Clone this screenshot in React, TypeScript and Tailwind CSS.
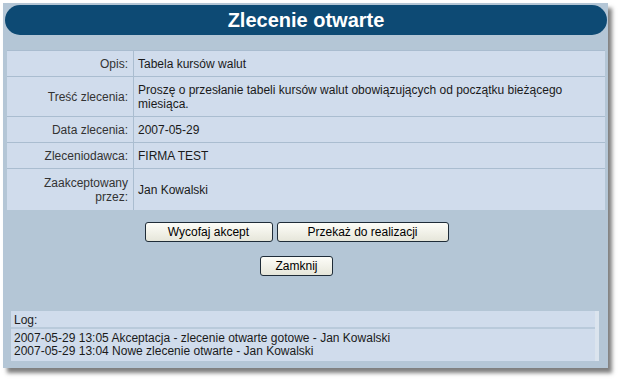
import React from "react";

const rows: { label: string; value: string; h: string }[] = [
  { label: "Opis:", value: "Tabela kursów walut", h: "h-[26px]" },
  {
    label: "Treść zlecenia:",
    value:
      "Proszę o przesłanie tabeli kursów walut obowiązujących od początku bieżącego miesiąca.",
    h: "h-[40px]",
  },
  { label: "Data zlecenia:", value: "2007-05-29", h: "h-[26px]" },
  { label: "Zleceniodawca:", value: "FIRMA TEST", h: "h-[26px]" },
  { label: "Zaakceptowany przez:", value: "Jan Kowalski", h: "h-[41px]" },
];

function Btn({ children, w }: { children: React.ReactNode; w: string }) {
  return (
    <button
      className={`${w} h-[20px] rounded-[3px] border border-[#1f2c38] bg-gradient-to-b from-[#fdfdf8] to-[#e6e6da] text-[12px] leading-[18px] text-black text-center`}
    >
      {children}
    </button>
  );
}

export default function App() {
  return (
    <div className="w-[621px] h-[383px] bg-white font-['Liberation_Sans',Arial,sans-serif] pt-[3px] pl-[3px]">
      <div className="w-[605px] h-[365px] bg-[#b4c6d6] shadow-[4px_5px_4px_rgba(0,0,0,0.5)] flex flex-col">
        <div className="ml-[2px] mr-[1px] mt-[2px] h-[30px] rounded-full bg-[#0d4a74] flex items-center justify-center">
          <span className="text-white font-bold text-[20px] leading-none">Zlecenie otwarte</span>
        </div>

        <div className="mt-[15px] ml-[4px] mr-[3px] border-t border-[#a9bccf] bg-[#d0dcec]">
          {rows.map((r, i) => (
            <div
              key={r.label}
              className={`flex ${r.h} ${i < rows.length - 1 ? "border-b border-[#aabdd0]" : ""}`}
            >
              <div className="w-[127px] shrink-0 border-r border-[#aabdd0] flex items-center justify-end pl-[8px] pr-[5px] text-right text-[12px] leading-[14px] text-[#333]">
                {r.label}
              </div>
              <div className="flex-1 flex items-center pl-[4px] pr-[8px] text-[12px] leading-[14px] text-[#1a1a1a]">
                {r.value}
              </div>
            </div>
          ))}
        </div>

        <div className="mt-[12px] flex justify-center gap-[4px] pr-[18px]">
          <Btn w="w-[128px]">Wycofaj akcept</Btn>
          <Btn w="w-[172px]">Przekaż do realizacji</Btn>
        </div>
        <div className="mt-[14px] flex justify-center pr-[18px]">
          <Btn w="w-[73px]">Zamknij</Btn>
        </div>

        <div className="mt-[35px] ml-[8px] w-[588px] bg-[#d0dcec] border-r-[4px] border-[#dbe4ee] text-[12px] text-[#1a1a1a]">
          <div className="h-[18px] pl-[3px] leading-[18px] border-b-2 border-[#b9cadb] text-[#222]">Log:</div>
          <div className="pl-[3px] pt-[3px] pb-[3px] leading-[13px]">
            <div>2007-05-29 13:05 Akceptacja - zlecenie otwarte gotowe - Jan Kowalski</div>
            <div>2007-05-29 13:04 Nowe zlecenie otwarte - Jan Kowalski</div>
          </div>
        </div>
      </div>
    </div>
  );
}
